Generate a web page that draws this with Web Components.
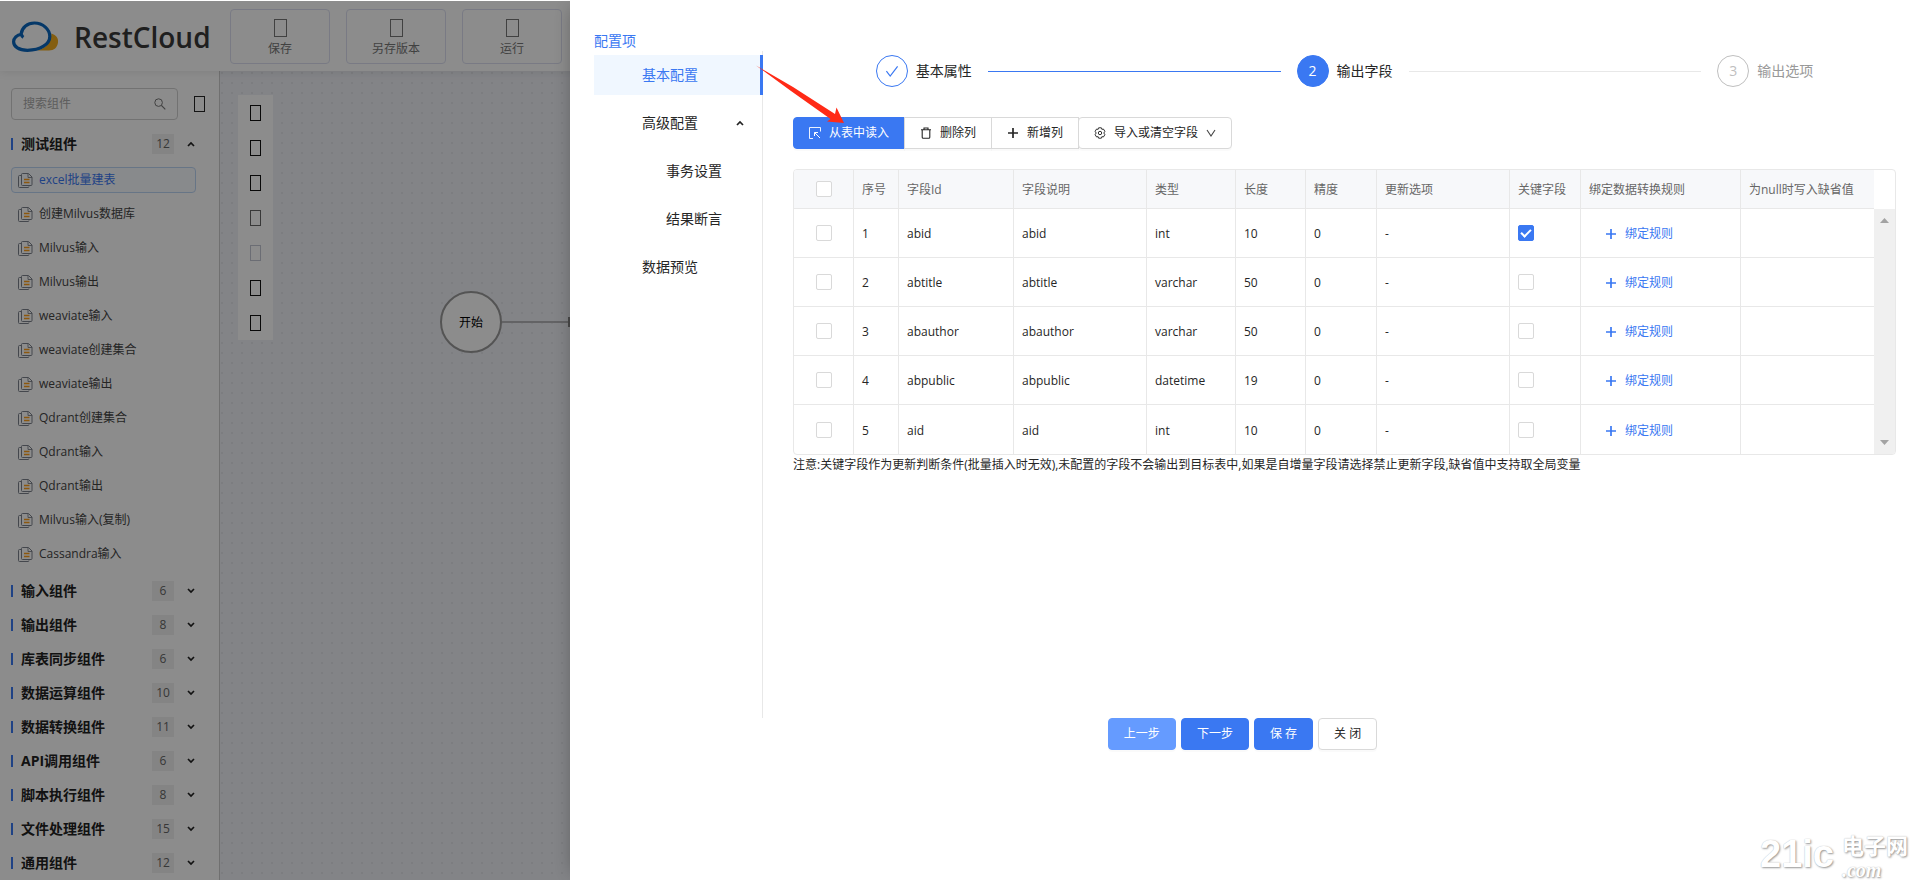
<!DOCTYPE html>
<html lang="zh-CN">
<head>
<meta charset="utf-8">
<title>RestCloud</title>
<style>
  html, body { height: 100%; }
  body {
    margin: 0;
    overflow: hidden;
    background: #fff;
    color: #262626;
    font-family: "Open Sans", "Noto Sans CJK SC", sans-serif;
    font-size: 12px;
    line-height: 20px;
    --blue: #3a78f2;
    --line: #e8e8e8;
    --border: #d9d9d9;
  }
</style>
</head>
<body>
<app-page></app-page>

<script>
const icons = {
  search: '<svg width="12" height="12" viewBox="0 0 12 12" fill="none" stroke="#777"><circle cx="4.6" cy="4.6" r="3.8"/><path d="M7.4 7.4 11.3 11.3" stroke-width="1.2"/></svg>',
  doc: '<svg width="15" height="15" viewBox="0 0 15 15" fill="none" stroke="#7d828c" stroke-width="1"><path d="M3.5 2.5H1.5a1 1 0 0 0-1 1v10a1 1 0 0 0 1 1h8.5a1 1 0 0 0 1-1"/><path d="M4.5.5h6L14 4v7.5a1 1 0 0 1-1 1H4.5a1 1 0 0 1-1-1v-10a1 1 0 0 1 1-1z"/><path d="M10 .8v3.7h4" stroke-width=".9"/><path d="M6 6.5h5.5M6 9.5h5.5" stroke="#ff9f1a" stroke-width="1.4"/></svg>',
  up: '<svg width="8" height="8" viewBox="0 0 8 8" fill="none" stroke="#222" stroke-width="1.7"><path d="M1 6 4 3l3 3"/></svg>',
  down: '<svg width="8" height="8" viewBox="0 0 8 8" fill="none" stroke="#222" stroke-width="1.7"><path d="M1 2l3 3 3-3"/></svg>',
  select: '<svg width="12" height="12" viewBox="0 0 12 12" fill="none" stroke="#fff"><path d="M4 11.5H.5V.5h11v4" stroke-width=".9"/><path d="M5.6 5.6 11 11M5.5 9V5.5H9"/></svg>',
  trash: '<svg width="12" height="12" viewBox="0 0 12 12" fill="none" stroke="#262626" stroke-width="1.1"><path d="M1 2.8h10M4 2.8V1h4v1.8M2.2 2.8v7.4q0 1 1 1h5.6q1 0 1-1V2.8"/></svg>',
  plus: '<svg width="12" height="12" viewBox="0 0 12 12" fill="none" stroke="currentColor" stroke-width="1.7"><path d="M6 1v10M1 6h10"/></svg>',
  gear: '<svg width="12" height="12" viewBox="0 0 12 12" fill="none" stroke="#333"><path d="M4.6.8h2.8l.5 1.6 1.5-.4 1.5 2.3L9.8 6l1.1 1.7L9.4 10l-1.5-.4-.5 1.6H4.6l-.5-1.6-1.5.4-1.5-2.3L2.2 6 1.1 4.3 2.6 2l1.5.4z"/><circle cx="6" cy="6" r="1.7"/></svg>',
  chevron: '<svg width="10" height="10" viewBox="0 0 10 10" fill="none" stroke="#444" stroke-width="1.1"><path d="M1 2 5 8l4-6"/></svg>',
  check: '<svg width="14" height="14" viewBox="0 0 14 14" fill="none" stroke="#3a78f2" stroke-width="1.2"><path d="M1.4 7.2 5.2 12 12.6 2.4"/></svg>',
  cloud: '<svg width="48" height="32" viewBox="0 0 48 32"><path d="M25 29.6C34 28 39 21 39.4 12.6 44.4 14 46.6 17.6 46 21.6 45.4 26.6 42 29.6 37 29.6z" fill="#f0ab1e"/><path d="M9 13.2C10 6 15.6 2 22.4 2 31 2 37.8 8.4 37.8 15.4 37.8 23 28.6 29.3 15.4 29.3 7 29.3 1.6 25.8 1.6 20.8 1.6 17 4.8 13.8 9.4 13.4 9.8 15 10.4 15.7 11.4 16.4" fill="#fff" stroke="#0a66bd" stroke-width="3.2" stroke-linejoin="round"/></svg>'
};

class BaseElement extends HTMLElement {
  constructor() {
    super();
    this.shadowDOM = this.attachShadow({mode: 'open'});
  }
  connectedCallback() {
    this.render();
  }
}

// hollow box of the missing icon font
class IconBox extends BaseElement {
  render() {
    this.shadowDOM.innerHTML = `
      <style>
        :host {
          display: block;
          box-sizing: border-box;
          width: 11px;
          height: 16px;
          border: 1px solid currentColor;
        }
        :host([large]) { width: 13px; height: 18px; }
      </style>`;
  }
}
customElements.define('icon-box', IconBox);

class HeaderButton extends BaseElement {
  render() {
    this.shadowDOM.innerHTML = `
      <style>
        :host { display: block; }
        button {
          display: flex;
          flex-direction: column;
          align-items: center;
          justify-content: center;
          gap: 2px;
          width: 100px;
          height: 55px;
          padding: 5px 0 0;
          background: none;
          border: 1px solid #dcdff0;
          border-radius: 4px;
          font: inherit;
          color: #777;
        }
      </style>
      <button type="button"><icon-box large></icon-box><slot></slot></button>`;
  }
}
customElements.define('header-button', HeaderButton);

class AppHeader extends BaseElement {
  render() {
    this.shadowDOM.innerHTML = `
      <style>
        :host {
          display: flex;
          align-items: center;
          gap: 16px;
          height: 71px;
          box-sizing: border-box;
          padding: 2px 0 0 12px;
          background: #fff;
          box-shadow: 0 2px 8px rgba(0, 0, 0, .08);
          z-index: 1;
        }
        .brand {
          display: flex;
          align-items: center;
          gap: 14px;
          width: 202px;
          font: 600 28px/32px "Open Sans", sans-serif;
          color: #3a3a3a;
        }
      </style>
      <div class="brand">${icons.cloud}<span>RestCloud</span></div>
      <header-button>保存</header-button>
      <header-button>另存版本</header-button>
      <header-button>运行</header-button>`;
  }
}
customElements.define('app-header', AppHeader);

class ComponentItem extends BaseElement {
  render() {
    this.shadowDOM.innerHTML = `
      <style>
        :host { display: block; }
        a {
          display: flex;
          align-items: center;
          gap: 6px;
          height: 24px;
          padding: 0 6px;
          border: 1px solid transparent;
          border-radius: 4px;
          color: #444;
          text-decoration: none;
        }
        :host([active]) a {
          color: var(--blue);
          background: #f8fbff;
          border-color: #bcd6f5;
        }
      </style>
      <a href="#">${icons.doc}<slot></slot></a>`;
  }
}
customElements.define('component-item', ComponentItem);

class ComponentGroup extends BaseElement {
  render() {
    const open = this.hasAttribute('open');
    this.shadowDOM.innerHTML = `
      <style>
        :host { display: block; }
        button {
          display: flex;
          align-items: center;
          width: 100%;
          height: 20px;
          padding: 0 1px 0 0;
          border: 0;
          background: none;
          color: #222;
          font: bold 14px/20px "Open Sans", "Noto Sans CJK SC", sans-serif;
          text-align: left;
        }
        .title { flex: 1; display: flex; align-items: center; gap: 8px; }
        .title::before { content: ""; width: 2px; height: 12px; background: var(--blue); }
        .count {
          width: 22px;
          margin-right: 13px;
          background: #f0f0f0;
          color: #666;
          font-size: 12px;
          font-weight: normal;
          text-align: center;
        }
        .list { display: flex; flex-direction: column; gap: 8px; }
        :host([open]) .list { padding-top: 13px; }
      </style>
      <button type="button" aria-expanded="${open}">
        <span class="title">${this.getAttribute('name')}</span>
        <span class="count">${this.getAttribute('count')}</span>
        ${open ? icons.up : icons.down}
      </button>
      <div class="list"><slot></slot></div>`;
  }
}
customElements.define('component-group', ComponentGroup);

const items = ['excel批量建表', '创建Milvus数据库', 'Milvus输入', 'Milvus输出', 'weaviate输入', 'weaviate创建集合',
  'weaviate输出', 'Qdrant创建集合', 'Qdrant输入', 'Qdrant输出', 'Milvus输入(复制)', 'Cassandra输入'];
const groups = [['输入组件', 6], ['输出组件', 8], ['库表同步组件', 6], ['数据运算组件', 10], ['数据转换组件', 11],
  ['API调用组件', 6], ['脚本执行组件', 8], ['文件处理组件', 15], ['通用组件', 12]];

class ComponentSidebar extends BaseElement {
  render() {
    this.shadowDOM.innerHTML = `
      <style>
        :host {
          display: flex;
          flex-direction: column;
          gap: 14px;
          box-sizing: border-box;
          width: 220px;
          padding: 17px 23px 0 11px;
          background: #fff;
          border-right: 1px solid #ccc;
        }
        .top { display: flex; align-items: center; gap: 16px; }
        .search {
          display: flex;
          align-items: center;
          box-sizing: border-box;
          width: 167px;
          height: 32px;
          padding: 0 11px;
          border: 1px solid #d0d0d0;
          border-radius: 4px;
        }
        input {
          flex: 1;
          min-width: 0;
          padding: 0;
          border: 0;
          outline: 0;
          background: none;
          font: inherit;
        }
        input::placeholder { color: #aaa; }
        .top, icon-box { flex: none; }
      </style>
      <div class="top">
        <label class="search"><input type="text" placeholder="搜索组件" aria-label="搜索组件">${icons.search}</label>
        <icon-box></icon-box>
      </div>
      <component-group name="测试组件" count="12" open>
        ${items.map((item, i) => `<component-item ${i === 0 ? 'active' : ''}>${item}</component-item>`).join('')}
      </component-group>
      ${groups.map(([name, count]) => `<component-group name="${name}" count="${count}"></component-group>`).join('')}`;
  }
}
customElements.define('component-sidebar', ComponentSidebar);

class FlowCanvas extends BaseElement {
  render() {
    const colors = ['#111', '#111', '#111', '#666', '#c4c6d4', '#111', '#111'];
    this.shadowDOM.innerHTML = `
      <style>
        :host {
          display: block;
          position: relative;
          box-sizing: border-box;
          padding: 24px 18px;
          background: radial-gradient(circle, #e2e3ea 1px, transparent 1px) -3px -3px / 10px 10px #eff0f6;
        }
        .tools {
          display: flex;
          flex-direction: column;
          align-items: center;
          gap: 19px;
          width: 35px;
          padding: 10px 0 9px;
          background: #fff;
        }
        .node {
          position: absolute;
          left: 220px;
          top: 220px;
          box-sizing: border-box;
          width: 62px;
          height: 62px;
          border: 2px solid #999;
          border-radius: 50%;
          background: #fff;
          line-height: 60px;
          text-align: center;
          color: #000;
        }
        .link { position: absolute; left: 282px; top: 250px; width: 68px; height: 2px; background: #b4b4b8; }
        .port { position: absolute; left: 348px; top: 246px; width: 10px; height: 10px; background: #888; }
      </style>
      <div class="tools">${colors.map(c => `<icon-box style="color:${c}"></icon-box>`).join('')}</div>
      <div class="node">开始</div>
      <div class="link"></div>
      <div class="port"></div>`;
  }
}
customElements.define('flow-canvas', FlowCanvas);

class ConfigMenu extends BaseElement {
  render() {
    this.shadowDOM.innerHTML = `
      <style>
        :host { display: block; width: 169px; }
        .title { font-size: 14px; color: var(--blue); }
        nav {
          display: flex;
          flex-direction: column;
          gap: 8px;
          box-sizing: border-box;
          min-height: 667px;
          padding-top: 4px;
          border-right: 1px solid var(--line);
        }
        a {
          display: flex;
          align-items: center;
          justify-content: space-between;
          height: 40px;
          padding: 0 18px 0 48px;
          color: #262626;
          font-size: 14px;
          text-decoration: none;
        }
        a.sub { padding-left: 72px; }
        a.active {
          margin-right: -1px;
          color: var(--blue);
          background: #f0f7ff;
          border-right: 3px solid var(--blue);
        }
      </style>
      <div class="title">配置项</div>
      <nav>
        <a class="active" href="#">基本配置</a>
        <a href="#">高级配置 ${icons.up}</a>
        <a class="sub" href="#">事务设置</a>
        <a class="sub" href="#">结果断言</a>
        <a href="#">数据预览</a>
      </nav>`;
  }
}
customElements.define('config-menu', ConfigMenu);

class StepItem extends BaseElement {
  render() {
    const state = this.getAttribute('state');
    this.shadowDOM.innerHTML = `
      <style>
        :host {
          display: flex;
          flex: 1;
          align-items: center;
          gap: 8px;
          font-size: 14px;
          white-space: nowrap;
        }
        :host(:last-child) { flex: none; color: #999; }
        .dot {
          display: flex;
          align-items: center;
          justify-content: center;
          box-sizing: border-box;
          width: 32px;
          height: 32px;
          border: 1px solid #bfbfbf;
          border-radius: 50%;
          color: #bfbfbf;
        }
        :host([state=finish]) .dot { border-color: var(--blue); }
        :host([state=process]) .dot { border-color: var(--blue); background: var(--blue); color: #fff; }
        :host(:not(:last-child))::after {
          content: "";
          flex: 1;
          height: 1px;
          margin: 0 8px;
          background: var(--line);
        }
        :host([state=finish])::after { background: var(--blue) !important; }
      </style>
      <span class="dot">${state === 'finish' ? icons.check : this.getAttribute('number')}</span>
      <slot></slot>`;
  }
}
customElements.define('step-item', StepItem);

class FieldToolbar extends BaseElement {
  render() {
    this.shadowDOM.innerHTML = `
      <style>
        :host { display: flex; }
        button {
          display: flex;
          align-items: center;
          gap: 8px;
          height: 32px;
          margin-right: -1px;
          padding: 0 15px;
          border: 1px solid var(--border);
          background: #fff;
          color: #262626;
          font: inherit;
          box-shadow: 0 2px 0 rgba(0, 0, 0, .02);
        }
        .primary {
          border-color: var(--blue);
          border-radius: 4px 0 0 4px;
          background: var(--blue);
          color: #fff;
        }
        .last { border-radius: 4px; }
      </style>
      <button type="button" class="primary">${icons.select}从表中读入</button>
      <button type="button">${icons.trash}删除列</button>
      <button type="button">${icons.plus}新增列</button>
      <button type="button" class="last">${icons.gear}导入或清空字段${icons.chevron}</button>`;
  }
}
customElements.define('field-toolbar', FieldToolbar);

class FieldTable extends BaseElement {
  set data(data) {
    this._data = data;
    this.render();
  }
  render() {
    if (!this._data) return;
    const widths = [60, 45, 115, 133, 89, 70, 71, 133, 71, 160, 133];
    const heads = ['序号', '字段Id', '字段说明', '类型', '长度', '精度', '更新选项', '关键字段', '绑定数据转换规则', '为null时写入缺省值'];
    this.shadowDOM.innerHTML = `
      <style>
        :host {
          display: flex;
          border: 1px solid var(--line);
          border-radius: 4px;
          overflow: hidden;
        }
        table { flex: 1; width: 0; table-layout: fixed; border-spacing: 0; }
        th, td {
          box-sizing: border-box;
          height: 49px;
          padding: 2px 8px 0;
          border-right: 1px solid var(--line);
          border-bottom: 1px solid var(--line);
          text-align: left;
          font-weight: normal;
          white-space: nowrap;
        }
        th { height: 39px; background: #f7f8fa; color: #666; }
        th:last-child, td:last-child { border-right: 0; }
        tbody tr:last-child td { border-bottom: 0; }
        th:first-child, td:first-child { text-align: center; }
        input {
          appearance: none;
          display: inline-block;
          box-sizing: border-box;
          width: 16px;
          height: 16px;
          margin: 0;
          border: 1px solid var(--border);
          border-radius: 2px;
          background: #fff;
          vertical-align: -3px;
        }
        input:checked { border-color: var(--blue); background: var(--blue); }
        input:checked::after {
          content: "";
          display: block;
          width: 4px;
          height: 8px;
          margin: 1px 0 0 4px;
          border: solid #fff;
          border-width: 0 2px 2px 0;
          transform: rotate(45deg);
        }
        button {
          display: flex;
          align-items: center;
          gap: 8px;
          padding: 0 16px;
          border: 0;
          background: none;
          color: var(--blue);
          font: inherit;
        }
        .scroll {
          display: flex;
          flex-direction: column;
          justify-content: space-between;
          align-items: center;
          width: 21px;
          margin-top: 39px;
          padding: 9px 0;
          box-sizing: border-box;
          background: #f0f0f0;
        }
      </style>
      <table>
        <colgroup>${widths.map(w => `<col style="width:${w}px">`).join('')}</colgroup>
        <thead><tr><th><input type="checkbox" aria-label="全选"></th>${heads.map(h => `<th>${h}</th>`).join('')}</tr></thead>
        <tbody>
        ${this._data.map((row, i) => `
          <tr>
            <td><input type="checkbox" aria-label="选择 ${row[0]}"></td>
            <td>${i + 1}</td>
            <td>${row[0]}</td>
            <td>${row[0]}</td>
            <td>${row[1]}</td>
            <td>${row[2]}</td>
            <td>0</td>
            <td>-</td>
            <td><input type="checkbox" aria-label="关键字段 ${row[0]}" ${row[3] ? 'checked' : ''}></td>
            <td><button type="button">${icons.plus}绑定规则</button></td>
            <td></td>
          </tr>`).join('')}
        </tbody>
      </table>
      <div class="scroll">
        <svg width="9" height="5"><path d="M0 5 4.5 0 9 5z" fill="#a3a3a3"/></svg>
        <svg width="9" height="5"><path d="M0 0 4.5 5 9 0z" fill="#a3a3a3"/></svg>
      </div>`;
  }
}
customElements.define('field-table', FieldTable);

class FormButtons extends BaseElement {
  render() {
    this.shadowDOM.innerHTML = `
      <style>
        :host { display: flex; justify-content: center; }
        button {
          height: 32px;
          margin-right: 5px;
          padding: 0 15px;
          border: 1px solid var(--blue);
          border-radius: 4px;
          background: var(--blue);
          color: #fff;
          font: inherit;
          box-shadow: 0 2px 0 rgba(0, 0, 0, .02);
        }
        .prev { border-color: #659bff; background: #659bff; }
        .close { border-color: var(--border); background: #fff; color: #262626; }
      </style>
      <button type="button" class="prev">上一步</button>
      <button type="button">下一步</button>
      <button type="button">保 存</button>
      <button type="button" class="close">关 闭</button>`;
  }
}
customElements.define('form-buttons', FormButtons);

class ConfigDrawer extends BaseElement {
  render() {
    this.shadowDOM.innerHTML = `
      <style>
        :host {
          display: block;
          box-sizing: border-box;
          padding: 31px 24px 0;
          background: #fff;
          box-shadow: -6px 0 16px -8px rgba(0, 0, 0, .3);
        }
        .content { display: flex; align-items: flex-start; gap: 30px; }
        .main { flex: 1; padding-top: 24px; }
        .steps { display: flex; gap: 8px; width: 85%; margin: 0 auto 30px; }
        field-table { margin-top: 20px; }
        p { margin: 0; }
      </style>
      <div class="content">
        <config-menu></config-menu>
        <div class="main">
          <div class="steps">
            <step-item state="finish" number="1">基本属性</step-item>
            <step-item state="process" number="2">输出字段</step-item>
            <step-item state="wait" number="3">输出选项</step-item>
          </div>
          <field-toolbar></field-toolbar>
          <field-table></field-table>
          <p>注意:关键字段作为更新判断条件(批量插入时无效),未配置的字段不会输出到目标表中,如果是自增量字段请选择禁止更新字段,缺省值中支持取全局变量</p>
        </div>
      </div>
      <form-buttons></form-buttons>`;
    this.shadowDOM.querySelector('field-table').data = [
      ['abid', 'int', 10, true],
      ['abtitle', 'varchar', 50],
      ['abauthor', 'varchar', 50],
      ['abpublic', 'datetime', 19],
      ['aid', 'int', 10]
    ];
  }
}
customElements.define('config-drawer', ConfigDrawer);

class SiteMark extends BaseElement {
  render() {
    this.shadowDOM.innerHTML = `
      <style>
        :host {
          display: flex;
          align-items: center;
          gap: 8px;
          color: #fff;
          text-shadow: 1px 1px 2px #999, 0 0 1px #bbb;
        }
        b { font: bold 38px/48px "Liberation Sans", sans-serif; }
        span, i { display: block; }
        span { font: bold 22px/32px "Noto Sans CJK SC", sans-serif; }
        i { font: italic bold 20px/20px "Liberation Serif", serif; }
      </style>
      <b>21ic</b><div><span>电子网</span><i>.com</i></div>`;
  }
}
customElements.define('site-mark', SiteMark);

class AppPage extends BaseElement {
  render() {
    this.shadowDOM.innerHTML = `
      <style>
        :host { display: flex; flex-direction: column; position: relative; height: 100vh; overflow: hidden; }
        .body { display: flex; flex: 1; min-height: 0; }
        component-sidebar { flex: none; overflow: hidden; }
        flow-canvas { flex: 1; }
        .mask { position: absolute; inset: 1px 0 0; background: rgba(0, 0, 0, .45); z-index: 2; }
        config-drawer { position: absolute; inset: 0 0 0 570px; z-index: 3; }
        .pointer { position: absolute; left: 755px; top: 64px; z-index: 4; }
        site-mark { position: absolute; right: 12px; bottom: 0; z-index: 4; }
      </style>
      <app-header></app-header>
      <div class="body">
        <component-sidebar></component-sidebar>
        <flow-canvas></flow-canvas>
      </div>
      <div class="mask"></div>
      <config-drawer></config-drawer>
      <svg class="pointer" width="92" height="62" viewBox="0 0 92 62"><path d="M1 1.5 38 23 80 50 81.5 43.5 89 59 72 57.5 75.5 55 36 27z" fill="#ff2a16"/></svg>
      <site-mark></site-mark>`;
  }
}
customElements.define('app-page', AppPage);
</script>
</body>
</html>
